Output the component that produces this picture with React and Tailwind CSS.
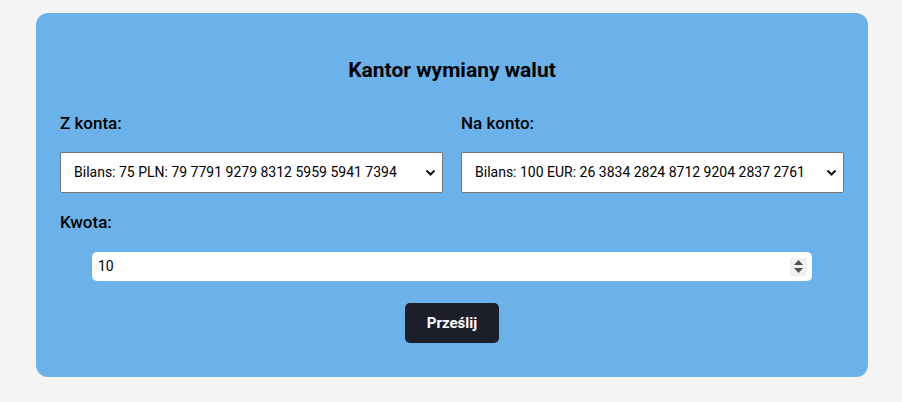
import { useState } from "react";

const FONT = "font-['Roboto','Liberation_Sans',sans-serif]";

function AccountSelect({ label, value, options }) {
  return (
    <div className="flex flex-col">
      <label className="mb-[17px] text-[17px] leading-6 font-medium text-black">{label}</label>
      <div className="flex h-[41px] items-center rounded-[2px] border border-[#767676] bg-white pr-[6px]">
        <select
          defaultValue={value}
          className="h-full min-w-0 flex-1 appearance-none pl-[13px] text-[14px] text-black outline-none"
        >
          {options.map((o) => (
            <option key={o}>{o}</option>
          ))}
        </select>
        <svg width="11" height="7" viewBox="0 0 11 7" className="shrink-0">
          <path d="M1.5 1.5l4 4 4-4" fill="none" stroke="#111" strokeWidth="2" />
        </svg>
      </div>
    </div>
  );
}

export default function App() {
  const [amount, setAmount] = useState("10");

  return (
    <div className={`min-h-screen bg-[#f4f4f4] pt-[13px] ${FONT}`}>
      <div className="ml-[36px] w-[832px] rounded-xl bg-[#6bb2eb] px-6 pt-[43px] pb-[34px]">
        <h1 className="text-center text-[21px] leading-7 font-bold text-black">Kantor wymiany walut</h1>

        <div className="mt-[27px] grid grid-cols-2 gap-[18px]">
          <AccountSelect
            label="Z konta:"
            value="Bilans: 75 PLN: 79 7791 9279 8312 5959 5941 7394"
            options={["Bilans: 75 PLN: 79 7791 9279 8312 5959 5941 7394"]}
          />
          <AccountSelect
            label="Na konto:"
            value="Bilans: 100 EUR: 26 3834 2824 8712 9204 2837 2761"
            options={["Bilans: 100 EUR: 26 3834 2824 8712 9204 2837 2761"]}
          />
        </div>

        <label className="mt-[17px] block text-[17px] leading-6 font-medium text-black">Kwota:</label>

        <div className="mt-[18px] px-8">
          <div className="flex h-[29px] items-center rounded-[5px] bg-white pl-[6px] pr-[5px]">
            <input
              value={amount}
              onChange={(e) => setAmount(e.target.value)}
              className="min-w-0 flex-1 text-[14px] text-black outline-none"
            />
            <div className="flex h-[18px] w-[17px] flex-col items-center justify-center gap-[3px] bg-[#efefef]">
              <svg width="9" height="5" viewBox="0 0 9 5"><path d="M4.5 0L9 5H0z" fill="#505050" /></svg>
              <svg width="9" height="5" viewBox="0 0 9 5"><path d="M0 0h9L4.5 5z" fill="#505050" /></svg>
            </div>
          </div>
        </div>

        <div className="mt-[22px] flex justify-center">
          <button className="h-10 w-[94px] rounded-[5px] bg-[#1c1e2a] text-[15px] font-bold text-white">
            Prześlij
          </button>
        </div>
      </div>
    </div>
  );
}
